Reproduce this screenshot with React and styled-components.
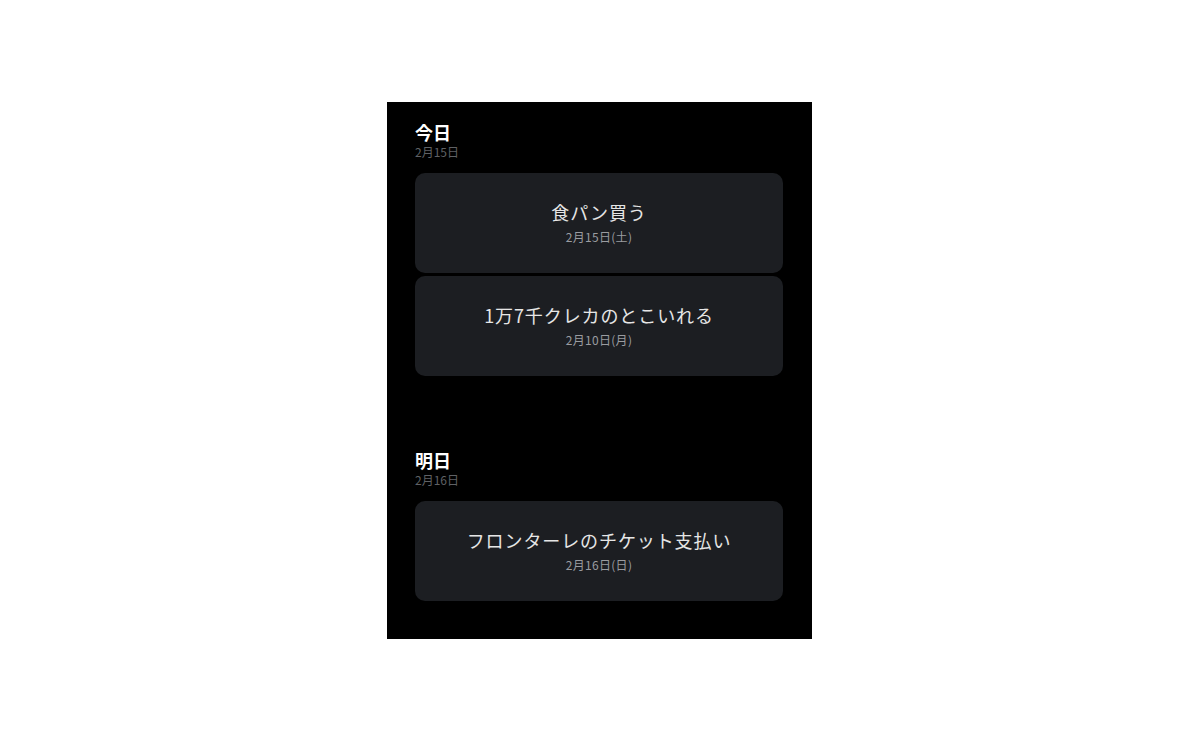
import React from "react";
import styled, { createGlobalStyle } from "styled-components";

const GlobalStyle = createGlobalStyle`
  html, body {
    margin: 0;
    padding: 0;
    background: #ffffff;
    font-family: "Noto Sans CJK JP", "Noto Sans", sans-serif;
  }
`;

const sections = [
  {
    title: "今日",
    date: "2月15日",
    tasks: [
      { name: "食パン買う", due: "2月15日(土)" },
      { name: "1万7千クレカのとこいれる", due: "2月10日(月)" },
    ],
  },
  {
    title: "明日",
    date: "2月16日",
    tasks: [{ name: "フロンターレのチケット支払い", due: "2月16日(日)" }],
  },
];

const App = () => {
  return (
    <>
      <GlobalStyle />
      <Page>
        <Panel>
          {sections.map((s) => (
            <Section key={s.title}>
              <Header>
                <Title>{s.title}</Title>
                <SubDate>{s.date}</SubDate>
              </Header>
              <List>
                {s.tasks.map((t) => (
                  <Card key={t.name}>
                    <TaskName>{t.name}</TaskName>
                    <TaskDue>{t.due}</TaskDue>
                  </Card>
                ))}
              </List>
            </Section>
          ))}
        </Panel>
      </Page>
    </>
  );
};

const Page = styled.div`
  display: flex;
  justify-content: center;
  padding-top: 102px;
  width: 1200px;
  height: 742px;
  box-sizing: border-box;
`;

const Panel = styled.div`
  width: 425px;
  height: 537px;
  box-sizing: border-box;
  margin-left: -1px;
  background: #000000;
  padding: 18px 29px 38px 28px;
  display: flex;
  flex-direction: column;
  gap: 72px;
`;

const Section = styled.section`
  display: flex;
  flex-direction: column;
`;

const Header = styled.div`
  display: flex;
  flex-direction: column;
  margin-bottom: 14px;
`;

const Title = styled.div`
  font-size: 18px;
  line-height: 24px;
  font-weight: 700;
  color: #ffffff;
`;

const SubDate = styled.div`
  font-size: 12px;
  line-height: 15px;
  color: #5f6165;
`;

const List = styled.div`
  display: flex;
  flex-direction: column;
  gap: 3px;
`;

const Card = styled.div`
  height: 100px;
  border-radius: 10px;
  background: #1c1e22;
  display: flex;
  flex-direction: column;
  align-items: center;
  justify-content: center;
  gap: 5px;
  padding-bottom: 3px;
  box-sizing: border-box;
`;

const TaskName = styled.div`
  font-size: 18px;
  line-height: 24px;
  color: #e6e6e6;
  letter-spacing: 0.9px;
`;

const TaskDue = styled.div`
  font-size: 12px;
  line-height: 15px;
  color: #9a9ca0;
  letter-spacing: 0.3px;
`;

export default App;
